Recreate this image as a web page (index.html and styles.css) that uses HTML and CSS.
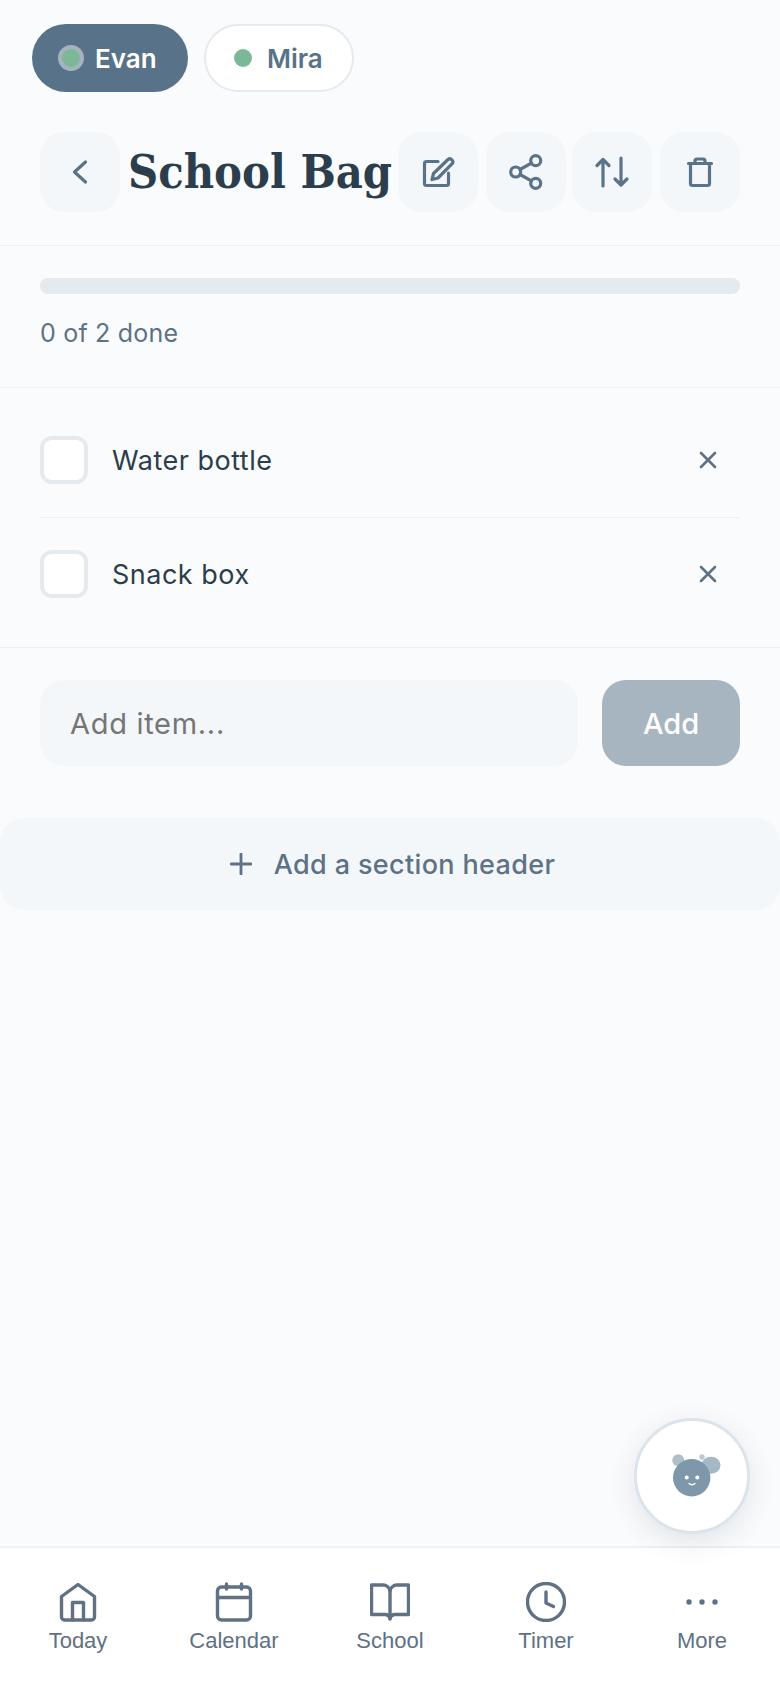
FILE: index.html
```html
<!DOCTYPE html>
<html lang="en">
<head>
    <meta charset="UTF-8">
    <meta name="viewport" content="width=device-width, initial-scale=1.0">
    <title>School Bag</title>
    <link rel="stylesheet" href="styles.css">
</head>
<body>
    <div class="app">
        <div class="profiles">
            <button class="pill pill-active"><span class="dot dot-ring"></span>Evan</button>
            <button class="pill"><span class="dot"></span>Mira</button>
        </div>

        <header class="header">
            <button class="icon-btn">
                <svg class="icon" viewBox="0 0 40 40"><path d="M25.5 10 14.5 20l11 10"/></svg>
            </button>
            <h1 class="title">School Bag</h1>
            <div class="actions">
                <button class="icon-btn">
                    <svg class="icon" viewBox="0 0 40 40"><path d="M20 9.5H8.5a2 2 0 0 0-2 2v20a2 2 0 0 0 2 2h20a2 2 0 0 0 2-2V21"/><path d="M30 7.5a3 3 0 0 1 4.2 4.2L20 26l-6 1.5 1.5-6z"/></svg>
                </button>
                <button class="icon-btn">
                    <svg class="icon" viewBox="0 0 40 40"><circle cx="29.7" cy="8.7" r="5"/><circle cx="9.7" cy="20" r="5"/><circle cx="29.7" cy="31.3" r="5"/><path d="M14 17.5l11.4-6.4M14 22.5l11.4 6.4"/></svg>
                </button>
                <button class="icon-btn">
                    <svg class="icon" viewBox="0 0 40 40"><path d="M11 34V7.500M5 13.500l6-6 6 6"/><path d="M29 6v27M23 27l6 6 6-6"/></svg>
                </button>
                <button class="icon-btn">
                    <svg class="icon" viewBox="0 0 40 40"><path d="M8.500 11.500h23M10.500 11.500v20a2 2 0 0 0 2 2h15a2 2 0 0 0 2-2v-20M15 11.500V9a2 2 0 0 1 2-2h6a2 2 0 0 1 2 2v2.500"/></svg>
                </button>
            </div>
        </header>

        <section class="progress">
            <div class="progress-bar"></div>
            <p class="progress-text">0 of 2 done</p>
        </section>

        <ul class="items">
            <li class="item">
                <span class="checkbox"></span>
                <span class="item-name">Water bottle</span>
                <svg class="remove" viewBox="0 0 18 18"><path d="M2 2l14 14M16 2 2 16"/></svg>
            </li>
            <li class="item">
                <span class="checkbox"></span>
                <span class="item-name">Snack box</span>
                <svg class="remove" viewBox="0 0 18 18"><path d="M2 2l14 14M16 2 2 16"/></svg>
            </li>
        </ul>

        <form class="add-form">
            <input class="add-input" type="text" placeholder="Add item...">
            <button class="add-btn" type="button">Add</button>
        </form>

        <button class="section-btn">
            <svg class="plus" viewBox="0 0 22 22"><path d="M11 1v20M1 11h20"/></svg>
            Add a section header
        </button>

        <nav class="nav">
            <a class="nav-item">
                <svg class="icon" viewBox="0 0 40 40"><path d="M20 2.500 36.500 14.500V35a3 3 0 0 1-3 3h-27a3 3 0 0 1-3-3V14.500z"/><path d="M14.500 38V20.500h11V38"/></svg>
                Today
            </a>
            <a class="nav-item">
                <svg class="icon" viewBox="0 0 40 40"><rect x="3.500" y="5" width="33" height="33" rx="4"/><path d="M3.500 15.500h33M12.500 2v5M27.500 2v5"/></svg>
                Calendar
            </a>
            <a class="nav-item">
                <svg class="icon" viewBox="0 0 40 40"><path d="M1.500 3H13a7 7 0 0 1 7 6 7 7 0 0 1 7-6h11.500v29.500H25a5 5 0 0 0-5 4 5 5 0 0 0-5-4H1.500z"/><path d="M20 9v28"/></svg>
                School
            </a>
            <a class="nav-item">
                <svg class="icon" viewBox="0 0 40 40"><circle cx="20" cy="20" r="18.500"/><path d="M20 10v11l7.500 3.500"/></svg>
                Timer
            </a>
            <a class="nav-item">
                <svg class="icon" viewBox="0 0 40 40"><circle class="filled" cx="7" cy="20" r="2.700"/><circle class="filled" cx="20" cy="20" r="2.700"/><circle class="filled" cx="33" cy="20" r="2.700"/></svg>
                More
            </a>
        </nav>

        <button class="fab">
            <svg class="mascot" viewBox="0 0 64 64">
                <circle cx="18.300" cy="16.300" r="6" fill="#aebfcb"/>
                <ellipse cx="51" cy="21.300" rx="9.500" ry="8.500" fill="#a5b8c6"/>
                <circle cx="42" cy="13" r="2.700" fill="#b9c8d3"/>
                <circle cx="31.700" cy="33.700" r="18.700" fill="#7f97aa"/>
                <circle cx="26.700" cy="33.500" r="2" fill="#fff"/>
                <circle cx="37.300" cy="33.500" r="2" fill="#fff"/>
                <path d="M29 39.500q3 2.500 6 0" fill="none" stroke="#fff" stroke-width="1.300" stroke-linecap="round"/>
            </svg>
        </button>
    </div>
</body>
</html>
```

FILE: styles.css
```css
* {
    box-sizing: border-box;
}

body {
    margin: 0;
    background-color: #fafbfd;
    font-family: Inter, "Noto Sans", sans-serif;
    color: #2c3e4c;
}

button {
    font-family: inherit;
    border: none;
    cursor: pointer;
    padding: 0;
}

.app {
    position: relative;
    width: 780px;
    height: 1688px;
    display: flex;
    flex-direction: column;
}

.profiles {
    display: flex;
    gap: 16px;
    padding: 24px 32px 0;
}

.pill {
    height: 68px;
    width: 150px;
    display: flex;
    align-items: center;
    gap: 11px;
    padding: 0 0 0 28px;
    border: 2px solid #e5eaee;
    border-radius: 34px;
    background-color: #fff;
    color: #587389;
    font-size: 26px;
    font-weight: 600;
}

.pill-active {
    width: 156px;
    border: none;
    padding: 0 0 0 26px;
    background-color: #587389;
    color: #fff;
}

.dot {
    width: 18px;
    height: 18px;
    margin: 0 4px 0 0;
    border-radius: 50%;
    background-color: #7ab898;
}

.dot-ring {
    width: 26px;
    height: 26px;
    margin: 0;
    border: 4px solid #a6b3bf;
}

.header {
    display: flex;
    align-items: center;
    margin-top: 40px;
    padding: 0 40px 33px;
    border-bottom: 1px solid #eceff3;
}

.icon-btn {
    flex: none;
    width: 80px;
    height: 80px;
    display: flex;
    align-items: center;
    justify-content: center;
    border-radius: 24px;
    background-color: #f4f7fa;
}

.icon {
    width: 40px;
    height: 40px;
    fill: none;
    stroke: #5a7389;
    stroke-width: 3.2;
    stroke-linecap: round;
    stroke-linejoin: round;
}

.title {
    margin: 0 0 0 8px;
    font-family: "DejaVu Serif Condensed", "DejaVu Serif", serif;
    font-stretch: condensed;
    font-size: 46.5px;
    font-weight: 700;
    line-height: 80px;
    white-space: nowrap;
    color: #2c3e4c;
}

.actions {
    display: flex;
    gap: 8px;
    margin-left: auto;
}

.actions .icon-btn:nth-child(3) {
    margin-left: -2px;
}

.progress {
    padding: 32px 40px 0;
    height: 142px;
    border-bottom: 1px solid #eceff3;
}

.progress-bar {
    height: 16px;
    border-radius: 8px;
    background-color: #e5eaee;
}

.progress-text {
    margin: 22px 0 0;
    font-size: 25px;
    letter-spacing: 0.2px;
    line-height: 34px;
    color: #5d7284;
}

.items {
    list-style-type: none;
    margin: 0;
    padding: 16px 40px;
    border-bottom: 1px solid #eceff3;
}

.item {
    display: flex;
    align-items: center;
    padding: 32px 0 33px;
    border-bottom: 1px solid #eceff3;
}

.item:last-child {
    border-bottom: none;
}

.checkbox {
    width: 48px;
    height: 48px;
    margin-right: 24px;
    border: 4px solid #e5eaee;
    border-radius: 12px;
    background-color: #fff;
}

.item-name {
    flex: 1;
    font-size: 27px;
    letter-spacing: 0.5px;
}

.remove {
    width: 18px;
    height: 18px;
    margin-right: 23px;
    fill: none;
    stroke: #5d7284;
    stroke-width: 2.6;
    stroke-linecap: round;
}

.add-form {
    display: flex;
    gap: 24px;
    padding: 32px 40px 0;
}

.add-input {
    flex: 1;
    min-width: 0;
    height: 86px;
    padding: 0 30px;
    border: none;
    border-radius: 24px;
    background-color: #f4f7fa;
    font-family: inherit;
    font-size: 29px;
    letter-spacing: 0.7px;
    color: #2c3e4c;
}

.add-input::placeholder {
    color: #757575;
    opacity: 1;
}

.add-btn {
    width: 138px;
    height: 86px;
    border-radius: 24px;
    background-color: #a7b5c0;
    color: #fff;
    font-size: 29px;
    font-weight: 500;
}

.section-btn {
    height: 92px;
    margin-top: 52px;
    padding-left: 5px;
    display: flex;
    align-items: center;
    justify-content: center;
    gap: 22px;
    border-radius: 24px;
    background-color: #f4f7fa;
    color: #5d7284;
    font-size: 27px;
    letter-spacing: 0.35px;
    font-weight: 500;
}

.plus {
    width: 22px;
    height: 22px;
    fill: none;
    stroke: #5d7284;
    stroke-width: 2.8;
    stroke-linecap: round;
}

.nav {
    margin-top: auto;
    height: 142px;
    display: grid;
    grid-template-columns: repeat(5, 1fr);
    padding-top: 34px;
    border-top: 2px solid #eef1f5;
    background-color: #fff;
}

.nav-item {
    display: flex;
    flex-direction: column;
    align-items: center;
    gap: 6px;
    font-family: "Liberation Sans", Arial, sans-serif;
    font-size: 22px;
    color: #5f7183;
}

.nav-item .icon {
    stroke: #5f7183;
    stroke-width: 3.4;
}

.filled {
    fill: #5a7389;
    stroke: none;
}

.fab {
    position: absolute;
    left: 634px;
    top: 1418px;
    width: 116px;
    height: 116px;
    display: flex;
    align-items: center;
    justify-content: center;
    border: 3px solid #dbe4eb;
    border-radius: 50%;
    background-color: #fff;
    box-shadow: 0 8px 28px rgba(44, 62, 76, 0.12);
}

.mascot {
    width: 64px;
    height: 64px;
}
```
